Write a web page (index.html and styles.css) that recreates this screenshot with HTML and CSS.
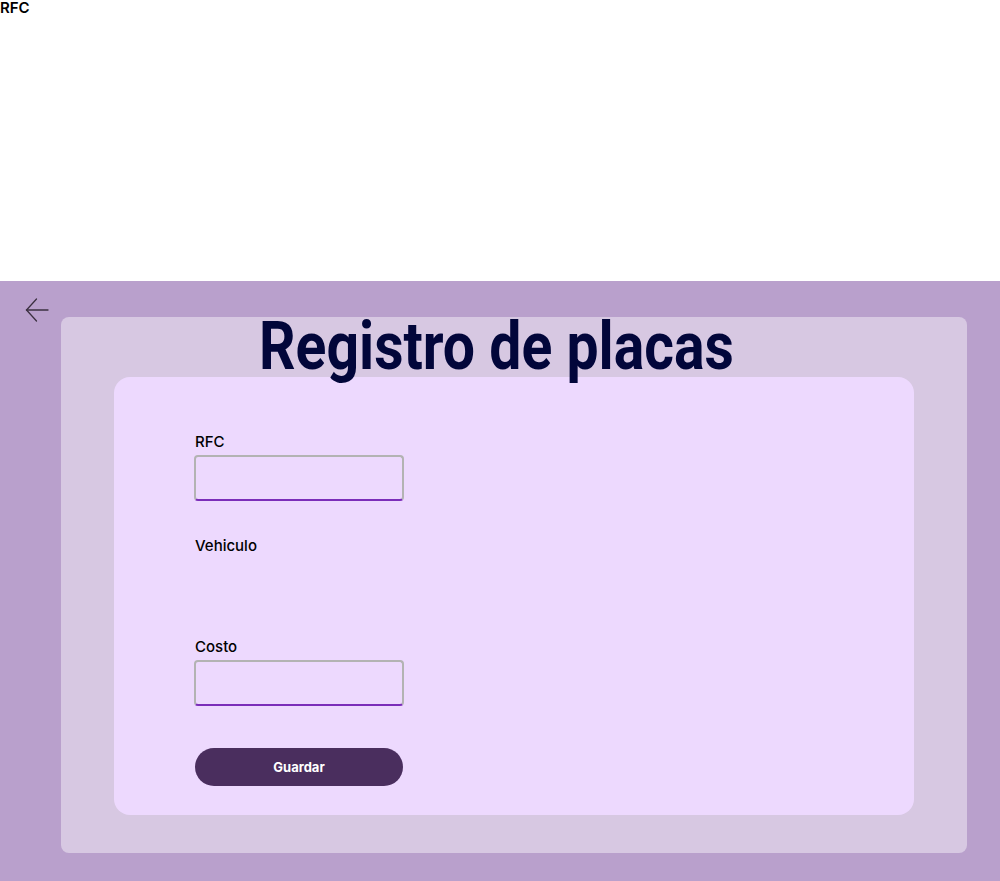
FILE: index.html
```html
<!DOCTYPE html>
<html lang="es">
<head>
<meta charset="utf-8">
<title>Registro de placas</title>
<link rel="stylesheet" href="styles.css">
</head>
<body>
<header class="top">
  <span class="top-label">RFC</span>
</header>
<main class="screen">
  <a class="back" href="#" aria-label="Regresar">
    <svg width="24" height="26" viewBox="0 0 24 26" fill="none" stroke="#3b3040" stroke-width="1.3" stroke-linecap="round">
      <path d="M1.5 13H23"/>
      <path d="M11.5 2L1.5 13l10 11"/>
    </svg>
  </a>
  <section class="panel">
    <div class="title-row"><h1 class="title">Registro de placas</h1></div>
    <form class="card">
      <div class="field">
        <label class="label">RFC</label>
        <input class="input" type="text">
      </div>
      <div class="field field-vehiculo">
        <label class="label">Vehiculo</label>
      </div>
      <div class="field">
        <label class="label">Costo</label>
        <input class="input" type="text">
      </div>
      <button class="btn" type="button">Guardar</button>
    </form>
  </section>
</main>
</body>
</html>
```

FILE: styles.css
```css
* { box-sizing: border-box; }
html, body { margin: 0; padding: 0; }
body {
  width: 1000px;
  font-family: Inter, "Liberation Sans", sans-serif;
  background: #ffffff;
  color: #000;
}
.top {
  height: 281px;
}
.top-label {
  display: block;
  font-size: 15px;
  font-weight: 600;
  line-height: 15px;
}
.screen {
  height: 600px;
  background: #b9a0cc;
  display: flex;
  align-items: flex-start;
  padding: 16px 33px 0 25px;
}
.back {
  display: block;
  width: 24px;
  height: 26px;
  margin-right: 12px;
}
.back svg { display: block; }
.panel {
  margin-top: 20px;
  width: 906px;
  height: 536px;
  background: #d7c8e2;
  border-radius: 8px;
  padding: 0 53px;
}
.title-row {
  height: 60px;
  display: flex;
  justify-content: center;
  padding-right: 36px;
}
.title {
  margin: 0;
  font-family: Roboto, sans-serif;
  font-weight: 700;
  font-size: 66px;
  line-height: 60px;
  color: #02063a;
  white-space: nowrap;
  transform: scaleX(0.865);
  letter-spacing: 0;
}
.card {
  height: 438px;
  background: #edd9fe;
  border-radius: 16px;
  padding: 56px 81px 0;
  display: flex;
  flex-direction: column;
  align-items: flex-start;
}
.field {
  display: flex;
  flex-direction: column;
  align-items: flex-start;
}
.label {
  font-size: 15px;
  font-weight: 500;
  line-height: 18px;
  margin-bottom: 4px;
  color: #000;
}
.input {
  margin-left: -1px;
  width: 210px;
  height: 46px;
  background: #edd9fe;
  border: 2px solid #b3b3b3;
  border-bottom-color: #7b2db9;
  border-radius: 4px;
  outline: none;
  font: inherit;
}
.field + .field { margin-top: 36px; }
.field-vehiculo { height: 65px; }
.btn {
  margin-top: 42px;
  width: 208px;
  height: 38px;
  border: none;
  border-radius: 19px;
  background: #4a2e5e;
  color: #ffffff;
  font-family: Inter, "Liberation Sans", sans-serif;
  font-size: 13px;
  font-weight: 700;
  cursor: pointer;
}
```
